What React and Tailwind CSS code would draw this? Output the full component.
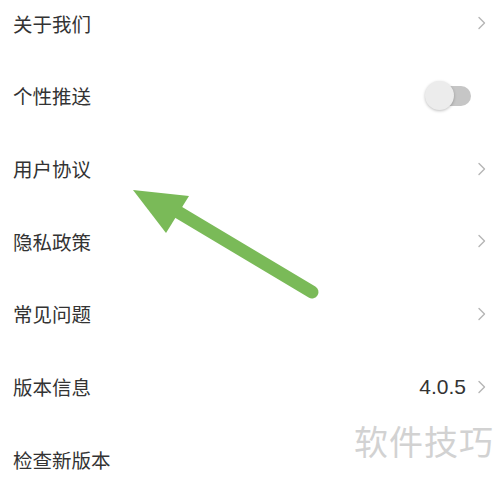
import React from 'react';

const Chevron = () => (
  <svg width="10" height="14" viewBox="0 0 10 14" className="shrink-0">
    <path d="M2 1.5 L7.5 7 L2 12.5" fill="none" stroke="#b5b5b5" strokeWidth="1.4" strokeLinecap="round" strokeLinejoin="round" />
  </svg>
);

const Toggle = () => (
  <div className="relative w-[46px] h-[30px] mr-[16px] flex items-center">
    <div className="ml-[10px] w-[36px] h-[20px] rounded-full bg-[#c6c6c6]" />
    <div className="absolute left-0 top-0 w-[29px] h-[29px] rounded-full bg-[#ececec] shadow-[0_1px_3px_rgba(0,0,0,0.25)]" />
  </div>
);

const rows = [
  { label: '关于我们', right: 'chevron' },
  { label: '个性推送', right: 'toggle' },
  { label: '用户协议', right: 'chevron' },
  { label: '隐私政策', right: 'chevron' },
  { label: '常见问题', right: 'chevron' },
  { label: '版本信息', right: 'version' },
  { label: '检查新版本', right: null },
];

export default function App() {
  return (
    <div className="relative w-[500px] h-[483px] overflow-hidden bg-white" style={{ fontFamily: '"Noto Sans CJK SC", "Noto Sans", sans-serif' }}>
      <div className="flex flex-col -mt-[13px]">
        {rows.map((r) => (
          <div key={r.label} className="h-[72.67px] flex items-center justify-between pl-[13px] pr-[13px]">
            <span className="text-[19.5px] text-[#333333] leading-none">{r.label}</span>
            {r.right === 'chevron' && <Chevron />}
            {r.right === 'toggle' && <Toggle />}
            {r.right === 'version' && (
              <div className="flex items-center gap-[11px]">
                <span className="text-[21px] text-[#333333] leading-none" style={{ fontFamily: '"Liberation Sans", Arial, sans-serif' }}>4.0.5</span>
                <Chevron />
              </div>
            )}
          </div>
        ))}
      </div>

      <svg className="absolute left-0 top-0 pointer-events-none" width="500" height="483" viewBox="0 0 500 483">
        <line x1="178" y1="212" x2="312" y2="292" stroke="#7aba58" strokeWidth="13" strokeLinecap="round" />
        <polygon points="133,190 189,196 166,233" fill="#7aba58" />
      </svg>

      <div className="absolute left-[354px] top-[424px] text-[34px] leading-none text-[#d2d2d2] tracking-[1px]">软件技巧</div>
    </div>
  );
}
